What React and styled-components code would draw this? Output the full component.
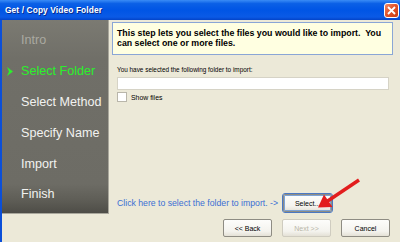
import React from "react";
import styled, { createGlobalStyle } from "styled-components";

const GlobalStyle = createGlobalStyle`
  html, body {
    margin: 0;
    padding: 0;
    background: #ece9d8;
  }
  body {
    font-family: "Liberation Sans", Arial, sans-serif;
  }
`;

const steps = [
  { label: "Intro", state: "done" },
  { label: "Select Folder", state: "current" },
  { label: "Select Method" },
  { label: "Specify Name" },
  { label: "Import" },
  { label: "Finish" },
];

function App() {
  return (
    <Window>
      <GlobalStyle />
      <TitleBar>
        <Title>Get / Copy Video Folder</Title>
        <CloseButton>
          <svg width="9" height="9" viewBox="0 0 9 9">
            <path d="M1 1L8 8M8 1L1 8" stroke="#fff" strokeWidth="1.8" />
          </svg>
        </CloseButton>
      </TitleBar>
      <Frame>
        <Main>
          <Sidebar>
            {steps.map((s) => (
              <Step key={s.label} state={s.state}>
                <Marker>
                  {s.state === "current" && (
                    <svg width="6" height="9" viewBox="0 0 6 9">
                      <polygon points="0,0 6,4.5 0,9 2,4.5" fill="#2bf02b" />
                    </svg>
                  )}
                </Marker>
                {s.label}
              </Step>
            ))}
          </Sidebar>
          <Content>
            <InfoBox>
              This step lets you select the files you would like to import.&nbsp; You
              <br />
              can select one or more files.
            </InfoBox>
            <FieldLabel>You have selected the following folder to import:</FieldLabel>
            <TextBox />
            <CheckRow>
              <CheckBox />
              <span>Show files</span>
            </CheckRow>
            <Spacer />
            <LinkRow>
              <LinkText>Click here to select the folder to import. -&gt;</LinkText>
              <Button focused>Select...</Button>
            </LinkRow>
          </Content>
        </Main>
        <Footer>
          <Button>&lt;&lt; Back</Button>
          <Button disabled>Next &gt;&gt;</Button>
          <Button>Cancel</Button>
        </Footer>
      </Frame>
      <Pointer width="70" height="50" viewBox="0 0 70 50">
        <line x1="59" y1="10" x2="27" y2="31.5" stroke="#e21d1d" strokeWidth="3.5" />
        <polygon points="18,37.5 32.5,37 24,24.5" fill="#e21d1d" />
      </Pointer>
    </Window>
  );
}

export default App;

const Window = styled.div`
  position: relative;
  width: 400px;
  height: 242px;
  overflow: hidden;
  background: #ece9d8;
`;

const TitleBar = styled.div`
  height: 20px;
  display: flex;
  align-items: center;
  padding-left: 5px;
  background: linear-gradient(
    to bottom,
    #3a8cf6 0%,
    #0b60e6 18%,
    #0055e5 50%,
    #0a5ae6 85%,
    #0343c8 100%
  );
`;

const Title = styled.div`
  color: #fff;
  font-weight: bold;
  font-size: 8.4px;
  letter-spacing: 0.1px;
  text-shadow: 1px 1px 0 #0a2a88;
`;

const CloseButton = styled.div`
  margin-left: auto;
  margin-right: 1px;
  width: 13px;
  height: 13px;
  border: 1px solid #fff;
  border-radius: 3px;
  background: linear-gradient(135deg, #f08a68 0%, #e3552c 45%, #c63a12 100%);
  display: flex;
  align-items: center;
  justify-content: center;
`;

const Frame = styled.div`
  border-left: 2px solid #0b4fd8;
  height: 222px;
  display: flex;
  flex-direction: column;
`;

const Main = styled.div`
  display: flex;
  height: 194px;
`;

const Sidebar = styled.div`
  width: 107px;
  box-sizing: border-box;
  padding-top: 5px;
  border-right: 1px solid #a9a79c;
  border-bottom: 1px solid #a9a79c;
  background: linear-gradient(
    to bottom,
    #7b7a72 0%,
    #706f68 20%,
    #6d6c65 85%,
    #5f5e57 93%,
    #4e4d47 100%
  );
`;

const Step = styled.div`
  display: flex;
  align-items: center;
  height: 30.8px;
  font-size: 12.6px;
  color: ${(p) =>
    p.state === "current" ? "#2bf02b" : p.state === "done" ? "#aaa9a1" : "#f2f2f0"};
`;

const Marker = styled.div`
  width: 19px;
  padding-left: 5px;
  box-sizing: border-box;
  display: flex;
  align-items: center;
`;

const Content = styled.div`
  margin-left: 3px;
  width: 281px;
  display: flex;
  flex-direction: column;
  padding-top: 2px;
  padding-bottom: 2px;
  box-sizing: border-box;
`;

const InfoBox = styled.div`
  height: 33px;
  box-sizing: border-box;
  border: 1px solid #8aa6d6;
  background: #ffffe1;
  padding: 5px 4px 0;
  font-weight: bold;
  font-size: 8.8px;
  line-height: 10px;
  color: #000;
  white-space: nowrap;
`;

const FieldLabel = styled.div`
  margin: 11px 0 0 5px;
  font-size: 6.4px;
  line-height: 8px;
  color: #000;
`;

const TextBox = styled.div`
  margin: 3px 0 0 5px;
  width: 272px;
  height: 13px;
  box-sizing: border-box;
  background: #fff;
  border: 1px solid #d6d3c6;
`;

const CheckRow = styled.div`
  margin: 2px 0 0 5px;
  display: flex;
  align-items: center;
  gap: 4px;
  font-size: 6.9px;
  color: #000;
`;

const CheckBox = styled.div`
  width: 10px;
  height: 10px;
  box-sizing: border-box;
  background: #fff;
  border: 1px solid #b9b6aa;
`;

const Spacer = styled.div`
  flex: 1;
`;

const LinkRow = styled.div`
  margin-left: 5px;
  display: flex;
  align-items: center;
  gap: 5px;
`;

const LinkText = styled.span`
  font-size: 8.7px;
  color: #3b6fd4;
  white-space: nowrap;
`;

const Button = styled.div`
  width: 49px;
  height: 18px;
  box-sizing: border-box;
  display: flex;
  align-items: center;
  justify-content: center;
  font-size: 7px;
  color: ${(p) => (p.disabled ? "#b9b6a8" : "#000")};
  background: linear-gradient(to bottom, #fdfdfb 0%, #f4f3ee 70%, #e4e1d6 100%);
  border: 1px solid ${(p) => (p.disabled ? "#cfccc0" : "#8e8c83")};
  border-radius: 2px;
  box-shadow: ${(p) => (p.focused ? "inset 0 0 0 1px #7ea3d6" : "none")};
  outline: ${(p) => (p.focused ? "1px solid #4a78c4" : "none")};
`;

const Footer = styled.div`
  display: flex;
  justify-content: flex-end;
  gap: 10px;
  padding: 5px 10px 0 0;
`;

const Pointer = styled.svg`
  position: absolute;
  left: 300px;
  top: 170px;
`;
